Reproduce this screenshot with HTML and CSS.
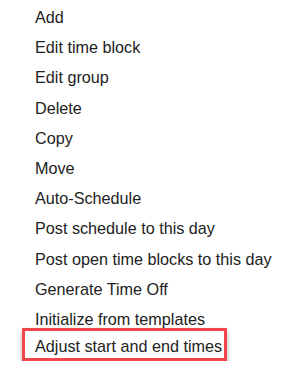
FILE: index.html
```html
<!DOCTYPE html>
<html>
<head>
    <meta charset="UTF-8">
    <title>Menu</title>
    <link rel="stylesheet" href="styles.css">
</head>
<body>
    <ul class="menu">
        <li class="menu-item">Add</li>
        <li class="menu-item">Edit time block</li>
        <li class="menu-item">Edit group</li>
        <li class="menu-item">Delete</li>
        <li class="menu-item">Copy</li>
        <li class="menu-item">Move</li>
        <li class="menu-item">Auto-Schedule</li>
        <li class="menu-item">Post schedule to this day</li>
        <li class="menu-item">Post open time blocks to this day</li>
        <li class="menu-item">Generate Time Off</li>
        <li class="menu-item">Initialize from templates</li>
        <li class="menu-item highlight">Adjust start and end times</li>
    </ul>
</body>
</html>
```

FILE: styles.css
```css
body {
    margin: 0;
    background-color: #ffffff;
    font-family: "Liberation Sans", Arial, sans-serif;
    color: #222222;
}

.menu {
    list-style: none;
    margin: 0;
    padding: 2px 0 0 0;
}

.menu-item {
    font-size: 16.2px;
    line-height: 30.2px;
    padding-left: 35px;
}

.highlight {
    display: inline-block;
    margin: -6px 0 0 22px;
    padding: 4px 2px 0 10px;
    line-height: 23px;
    border: 3px solid #f0454a;
    box-shadow: 0 3px 5px rgba(0, 0, 0, 0.35);
}
```
